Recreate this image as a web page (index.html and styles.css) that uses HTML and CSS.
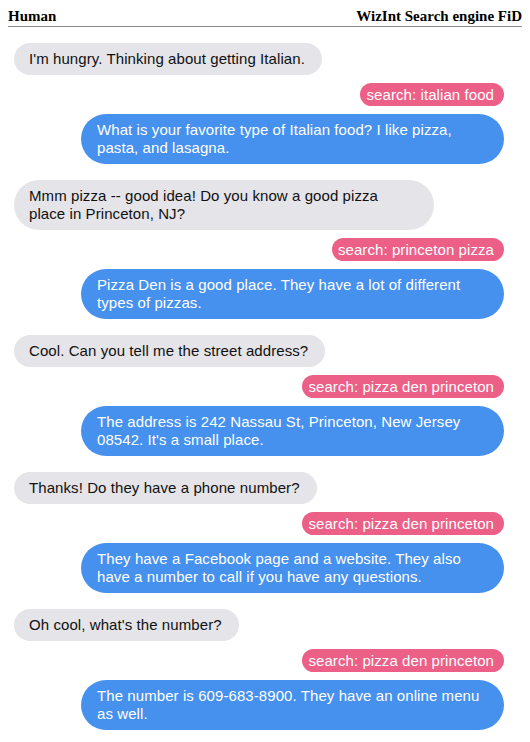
FILE: index.html
```html
<!DOCTYPE html>
<html>
<head>
<meta charset="utf-8">
<link rel="stylesheet" href="styles.css">
</head>
<body>
<div class="header">
  <span class="who">Human</span>
  <span class="who">WizInt Search engine FiD</span>
</div>
<div class="chat">
  <div class="turn">
    <div class="bubble human">I'm hungry. Thinking about getting Italian.</div>
    <div class="search">search: italian food</div>
    <div class="bubble bot">What is your favorite type of Italian food? I like pizza, pasta, and lasagna.</div>
  </div>
  <div class="turn">
    <div class="bubble human">Mmm pizza -- good idea! Do you know a good pizza place in Princeton, NJ?</div>
    <div class="search">search: princeton pizza</div>
    <div class="bubble bot">Pizza Den is a good place. They have a lot of different types of pizzas.</div>
  </div>
  <div class="turn">
    <div class="bubble human">Cool. Can you tell me the street address?</div>
    <div class="search">search: pizza den princeton</div>
    <div class="bubble bot">The address is 242 Nassau St, Princeton, New Jersey 08542. It's a small place.</div>
  </div>
  <div class="turn">
    <div class="bubble human">Thanks! Do they have a phone number?</div>
    <div class="search">search: pizza den princeton</div>
    <div class="bubble bot">They have a Facebook page and a website. They also have a number to call if you have any questions.</div>
  </div>
  <div class="turn">
    <div class="bubble human">Oh cool, what's the number?</div>
    <div class="search">search: pizza den princeton</div>
    <div class="bubble bot">The number is 609-683-8900. They have an online menu as well.</div>
  </div>
</div>
</body>
</html>
```
FILE: styles.css
```css
body {
  margin: 8px;
  background: #ffffff;
  font-family: "Liberation Serif", "Times New Roman", serif;
}

.header {
  display: flex;
  justify-content: space-between;
  line-height: 16px;
  padding-bottom: 2px;
  border-bottom: 1px solid #8c8c8c;
}

.who {
  font-weight: bold;
  font-size: 15px;
  color: #000;
}

.chat {
  display: flex;
  flex-direction: column;
  gap: 16px;
  padding: 16px 18px 0 6px;
  font-family: "Liberation Sans", Arial, Helvetica, sans-serif;
  font-size: 15px;
  letter-spacing: 0.08px;
}

.turn {
  display: flex;
  flex-direction: column;
  gap: 8px;
}

.bubble {
  max-width: 423px;
  box-sizing: border-box;
  line-height: 18px;
  padding: 7px 17px 7px 15px;
  border-radius: 25px;
}

.human {
  align-self: flex-start;
  max-width: 420px;
  background: #e4e4e9;
  color: #111;
}

.bot {
  align-self: flex-end;
  width: 423px;
  padding-left: 16px;
  background: #4690ee;
  color: #fff;
}

.search {
  align-self: flex-end;
  background: #ec5f87;
  color: #fff;
  line-height: 19px;
  padding: 2px 10px 2px 6px;
  border-radius: 12px;
}
```
